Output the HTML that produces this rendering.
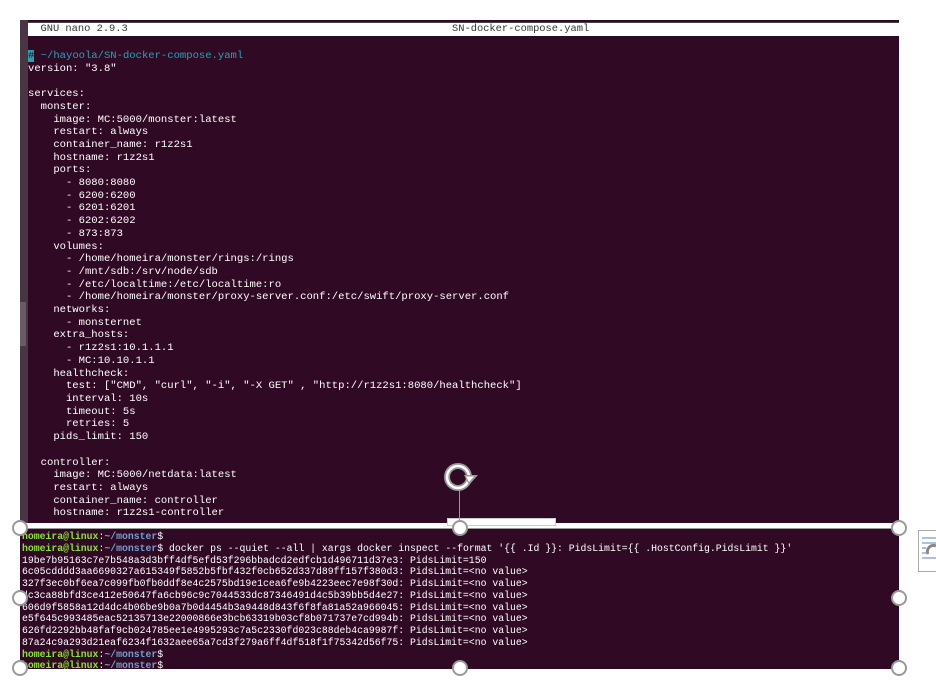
<!DOCTYPE html>
<html><head><meta charset="utf-8"><style>
body{margin:0;width:936px;height:686px;background:#fff;position:relative;overflow:hidden;font-family:"Liberation Mono",monospace}
.top{position:absolute;left:20px;top:20px;width:879px;height:503px;background:#300a24}
.strip{position:absolute;left:20px;top:20px;width:8px;height:503px;background:#4a3545}
.strip2{position:absolute;left:20px;top:302px;width:6px;height:44px;background:#6a5a66}
.title{position:absolute;left:28px;top:22px;width:871px;height:13px;background:#fff;border-top:1px solid #444;font-size:10.4px;line-height:13px;color:#333;white-space:pre}
pre{margin:0;position:absolute;font-family:"Liberation Mono",monospace;white-space:pre}
.t{left:28px;top:50px;font-size:10.55px;line-height:12.7px;color:#fff}
.c{color:#2aa1b3}
.bot{position:absolute;left:20px;top:528px;width:879px;height:140px;background:#300a24;border-top:1px solid #999;overflow:hidden}
.b{left:2px;top:2px;font-size:9.8px;line-height:11.75px;color:#fff}
.g{color:#8ae234;font-weight:bold}
.bl{color:#729fcf;font-weight:bold}
.h{position:absolute;width:12px;height:12px;border:2px solid #999;border-radius:50%;background:#fff}
</style></head><body>
<div class="top"></div><div class="strip"></div><div class="strip2"></div>
<div class="title">  GNU nano 2.9.3                                                    SN-docker-compose.yaml</div>
<pre class="t"><span class="c"><span style="background:#2aa1b3;color:#300a24">#</span> ~/hayoola/SN-docker-compose.yaml</span>
version: "3.8"

services:
  monster:
    image: MC:5000/monster:latest
    restart: always
    container_name: r1z2s1
    hostname: r1z2s1
    ports:
      - 8080:8080
      - 6200:6200
      - 6201:6201
      - 6202:6202
      - 873:873
    volumes:
      - /home/homeira/monster/rings:/rings
      - /mnt/sdb:/srv/node/sdb
      - /etc/localtime:/etc/localtime:ro
      - /home/homeira/monster/proxy-server.conf:/etc/swift/proxy-server.conf
    networks:
      - monsternet
    extra_hosts:
      - r1z2s1:10.1.1.1
      - MC:10.10.1.1
    healthcheck:
      test: ["CMD", "curl", "-i", "-X GET" , "http://r1z2s1:8080/healthcheck"]
      interval: 10s
      timeout: 5s
      retries: 5
    pids_limit: 150

  controller:
    image: MC:5000/netdata:latest
    restart: always
    container_name: controller
    hostname: r1z2s1-controller</pre>
<div style="position:absolute;left:447px;top:518px;width:107px;height:6px;background:#fff;border:1px solid #ccc"></div>
<div style="position:absolute;left:459px;top:488px;width:1px;height:34px;background:#999"></div>
<svg style="position:absolute;left:442px;top:461px" width="40" height="32" viewBox="0 0 40 32"><circle cx="16" cy="16" r="11" fill="none" stroke="#999" stroke-width="6"/><circle cx="16" cy="16" r="11" fill="none" stroke="#fff" stroke-width="2.5"/><path d="M22 14 L36 14 L27 24 Z" fill="#999"/><path d="M24 15.5 L32 15.5 L27 21 Z" fill="#fff"/></svg>
<div class="bot"><pre class="b"><span class="g">homeira@linux</span>:<span class="bl">~/monster</span>$
<span class="g">homeira@linux</span>:<span class="bl">~/monster</span>$ docker ps --quiet --all | xargs docker inspect --format '{{ .Id }}: PidsLimit={{ .HostConfig.PidsLimit }}'
19be7b95163c7e7b548a3d3bff4df5efd53f296bbadcd2edfcb1d496711d37e3: PidsLimit=150
6c05cdddd3aa6690327a615349f5852b5fbf432f0cb652d337d89ff157f380d3: PidsLimit=&lt;no value&gt;
327f3ec0bf6ea7c099fb0fb0ddf8e4c2575bd19e1cea6fe9b4223eec7e98f30d: PidsLimit=&lt;no value&gt;
dc3ca88bfd3ce412e50647fa6cb96c9c7044533dc87346491d4c5b39bb5d4e27: PidsLimit=&lt;no value&gt;
606d9f5858a12d4dc4b06be9b0a7b0d4454b3a9448d843f6f8fa81a52a966045: PidsLimit=&lt;no value&gt;
e5f645c993485eac52135713e22000866e3bcb63319b03cf8b071737e7cd994b: PidsLimit=&lt;no value&gt;
626fd2292bb48faf9cb024785ee1e4995293c7a5c2330fd023c88deb4ca9987f: PidsLimit=&lt;no value&gt;
87a24c9a293d21eaf6234f1632aee65a7cd3f279a6ff4df518f1f75342d56f75: PidsLimit=&lt;no value&gt;
<span class="g">homeira@linux</span>:<span class="bl">~/monster</span>$
<span class="g">homeira@linux</span>:<span class="bl">~/monster</span>$</pre></div>
<div class="h" style="left:12px;top:520px"></div>
<div class="h" style="left:452px;top:520px"></div>
<div class="h" style="left:891px;top:520px"></div>
<div class="h" style="left:12px;top:590px"></div>
<div class="h" style="left:891px;top:590px"></div>
<div class="h" style="left:12px;top:660px"></div>
<div class="h" style="left:452px;top:660px"></div>
<div class="h" style="left:891px;top:660px"></div>
<div style="position:absolute;left:918px;top:530px;width:20px;height:40px;border:1px solid #aaa;background:#fff"></div>
<svg style="position:absolute;left:922px;top:536px" width="14" height="28"><g stroke="#5b7fbf" stroke-width="1"><line x1="0" y1="2" x2="14" y2="2"/><line x1="0" y1="7" x2="14" y2="7"/><line x1="0" y1="12" x2="4" y2="12"/><line x1="0" y1="17" x2="4" y2="17"/><line x1="0" y1="22" x2="14" y2="22"/></g><path d="M6 18 A6 6 0 0 1 14 10" stroke="#888" stroke-width="3" fill="none"/></svg>
</body></html>
